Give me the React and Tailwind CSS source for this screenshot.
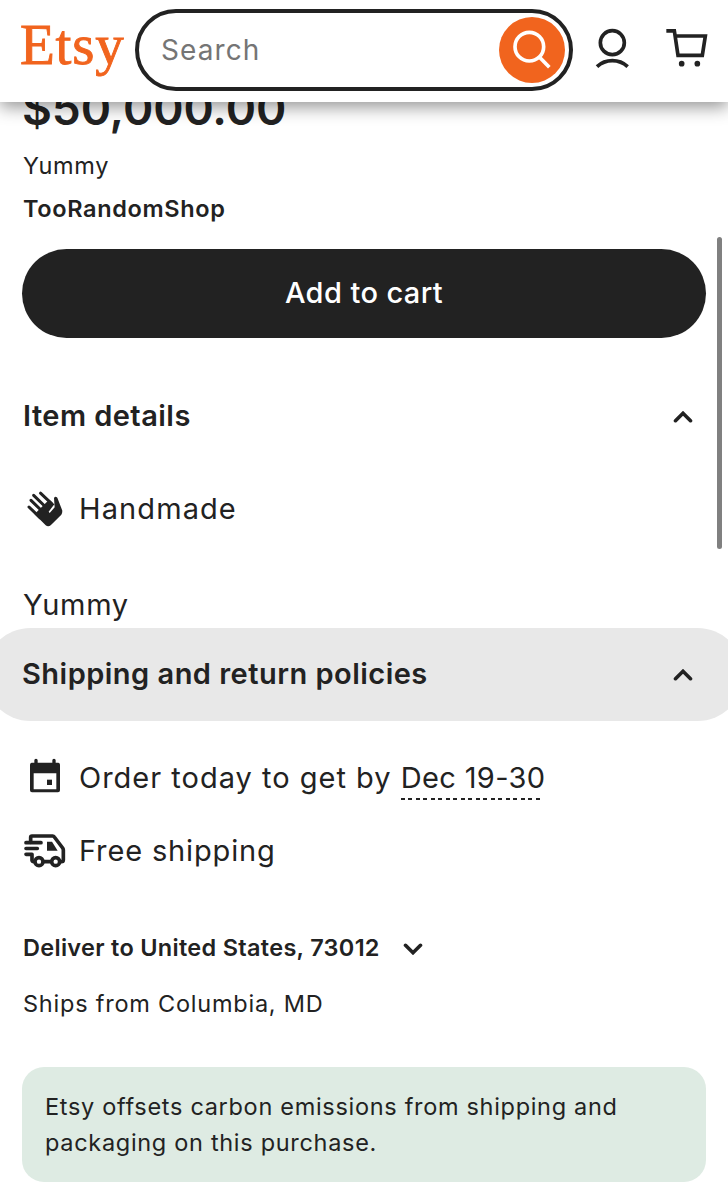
import React, { useState } from 'react';

function SearchIcon() {
  return (
    <svg viewBox="444 84 118 118" className="h-[39.333px] w-[39.333px]" fill="none" stroke="#fff" strokeWidth="11">
      <circle cx="496" cy="134" r="43" />
      <path d="M526 165 556 196" />
    </svg>
  );
}

function UserIcon() {
  return (
    <svg viewBox="693 84 105 120" className="h-10 w-[35px]" fill="none" stroke="#222" strokeWidth="11">
      <circle cx="745" cy="128" r="36" />
      <path d="M699 200c13-12 29-18 46-18s33 6 46 18" />
    </svg>
  );
}

function CartIcon() {
  return (
    <svg viewBox="903 84 129 120" className="h-10 w-[43px]" fill="none" stroke="#222" strokeWidth="11">
      <path d="M907 92.500H931L942 166H1015L1024 108H935" />
      <circle cx="953" cy="191" r="8.500" fill="#222" stroke="none" />
      <circle cx="1000" cy="191" r="8.500" fill="#222" stroke="none" />
    </svg>
  );
}

function HandIcon() {
  return (
    <svg viewBox="78 328 114 114" className="h-[38px] w-[38px]" fill="#222">
      <g stroke="#222" strokeWidth="9" strokeLinecap="round">
        <path d="M121.500 337.500 154 368" />
        <path d="M101 344 140 382" />
        <path d="M93 359 132 397" />
        <path d="M87 379 120 411" />
      </g>
      <path d="M113 391 126 378 138 366 148 357 163 371 146 393 149 397 164 380 162 352Q166 345 172 351L187 390Q187 398 184 402L153 433Q145 440 137 434L104 401Z" />
    </svg>
  );
}

function CalendarIcon() {
  return (
    <svg viewBox="72 50 126 126" className="h-[42px] w-[42px]" fill="#222">
      <path
        fillRule="evenodd"
        d="M103 67V60a5 5 0 0 1 10 0v7h44V60a5 5 0 0 1 10 0v7h7a6 6 0 0 1 6 6v77a6 6 0 0 1-6 6H96a6 6 0 0 1-6-6V73a6 6 0 0 1 6-6ZM101 99v48h68V99Z"
      />
      <path d="M141 118h15v16h-15z" />
    </svg>
  );
}

function TruckIcon() {
  return (
    <svg viewBox="72 269 126 126" className="h-[42px] w-[42px]" fill="none" stroke="#222" strokeWidth="11" strokeLinecap="round" strokeLinejoin="round">
      <path d="M92 306V291Q92 287 96 287H158Q161 287 163 290L188 323Q190 326 190 329V359Q190 364 184 364" />
      <path d="M78 307H123M78 324.500H112M78 342H96V360Q97 364 101 364M134 364H150" />
      <circle cx="117" cy="364" r="12" />
      <circle cx="167" cy="364" r="12" />
      <path d="M141 304H156L173 331H141Z" fill="#222" stroke="none" />
    </svg>
  );
}

function Chevron({ open }) {
  return (
    <svg
      viewBox="0 0 20 12"
      className={open ? 'mt-[2px] h-3 w-5' : 'mt-[2px] h-3 w-5 rotate-180'}
      fill="none"
      stroke="#222"
      strokeWidth="3.600"
      strokeLinecap="round"
    >
      <path d="M2.500 9.700 10 2.300 17.500 9.700" />
    </svg>
  );
}

export default function App() {
  const [detailsOpen, setDetailsOpen] = useState(true);
  const [policiesOpen, setPoliciesOpen] = useState(true);

  return (
    <div className="relative h-[1200px] w-[728px] overflow-hidden bg-white font-['Inter',sans-serif] text-[#222]">
      <header className="relative z-10 flex h-[102px] items-start bg-white pl-5 shadow-[0_5px_16px_rgba(0,0,0,0.42)]">
        <a href="#" className="mt-[13px] w-[115px] font-['Liberation_Serif',serif] text-[57px] leading-[64px] tracking-[0.8px] text-[#f1641e] [-webkit-text-stroke:0.9px_#f1641e]">
          Etsy
        </a>
        <div className="mt-[9px] flex h-[82px] w-[438px] items-center justify-between rounded-full border-4 border-[#222] pl-[22px] pr-1">
          <span className="text-[28px] tracking-[1.1px] text-[#757575]">Search</span>
          <button type="button" aria-label="Search" className="grid h-[66px] w-[66px] place-items-center rounded-full bg-[#f1641e]">
            <SearchIcon />
          </button>
        </div>
        <button type="button" aria-label="Account" className="ml-[22px] mt-7">
          <UserIcon />
        </button>
        <button type="button" aria-label="Cart" className="ml-[35px] mt-7">
          <CartIcon />
        </button>
      </header>

      <main className="px-[22px]">
        <p className="-mt-4 h-[60px] text-[46px] font-semibold leading-[45px] tracking-[-0.1px]">$50,000.00</p>
        <p className="h-10 pl-px text-[23.5px] leading-10 tracking-[0.6px]">Yummy</p>
        <a href="#" className="block h-[46px] pl-px text-[23.5px] font-semibold leading-[46px] tracking-[0.65px]">TooRandomShop</a>
        <button type="button" className="mt-[17px] block h-[89px] w-[684px] rounded-full bg-[#222] pb-px text-[29px] font-medium tracking-[0.4px] text-white">
          Add to cart
        </button>

        <button
          type="button"
          onClick={() => setDetailsOpen(!detailsOpen)}
          className="mt-8 flex h-[92px] w-full items-center justify-between pl-px pr-[13px]"
        >
          <span className="text-[29px] font-semibold tracking-[0.45px]">Item details</span>
          <Chevron open={detailsOpen} />
        </button>
        {detailsOpen ? (
          <div className="h-[166px] pt-6">
            <div className="flex h-[46px] items-center pl-1">
              <HandIcon />
              <span className="ml-[15px] text-[29px] tracking-[1.1px]">Handmade</span>
            </div>
            <p className="mt-[50px] h-[46px] pl-px text-[29px] leading-[46px] tracking-[0.7px]">Yummy</p>
          </div>
        ) : null}

        <button
          type="button"
          onClick={() => setPoliciesOpen(!policiesOpen)}
          className="-mx-[38px] flex h-[93px] w-[760px] items-center justify-between rounded-full bg-[#e8e8e8] pb-px pl-[38px] pr-[51px]"
        >
          <span className="text-[29px] font-semibold tracking-[0.48px]">Shipping and return policies</span>
          <Chevron open={policiesOpen} />
        </button>
        {policiesOpen ? (
          <div className="pt-[34px]">
            <div className="flex h-[46px] items-center gap-[13px] pl-[2px]">
              <CalendarIcon />
              <p className="text-[29px] leading-[44px] tracking-[1px]">
                Order today to get by{' '}
                <span className="bg-[repeating-linear-gradient(90deg,#222_0_4px,transparent_4px_7.5px)] bg-[length:139px_2px] bg-bottom-left bg-no-repeat pb-[5px] tracking-[0.35px]">Dec 19-30</span>
              </p>
            </div>
            <div className="mt-[27px] flex h-[46px] items-center gap-[13px] pl-[2px]">
              <TruckIcon />
              <span className="text-[29px] tracking-[0.85px]">Free shipping</span>
            </div>
            <button type="button" className="mt-[54px] flex h-10 items-center gap-[23px] pl-px">
              <span className="text-[23.5px] font-semibold tracking-[0.3px]">Deliver to United States, 73012</span>
              <Chevron open={false} />
            </button>
            <p className="mt-4 h-10 pl-px text-[23.5px] leading-10 tracking-[0.77px]">Ships from Columbia, MD</p>
            <p className="mt-[43px] h-[115px] w-[684px] rounded-[22px] bg-[#deebe3] pl-[23px] pt-[22px] text-[23.5px] leading-9 tracking-[0.69px]">
              Etsy offsets carbon emissions from shipping and
              <br />
              packaging on this purchase.
            </p>
          </div>
        ) : null}
      </main>

      <div className="absolute right-[6px] top-[237px] z-20 h-[312px] w-[5px] rounded-full bg-[#808080]" />
    </div>
  );
}
